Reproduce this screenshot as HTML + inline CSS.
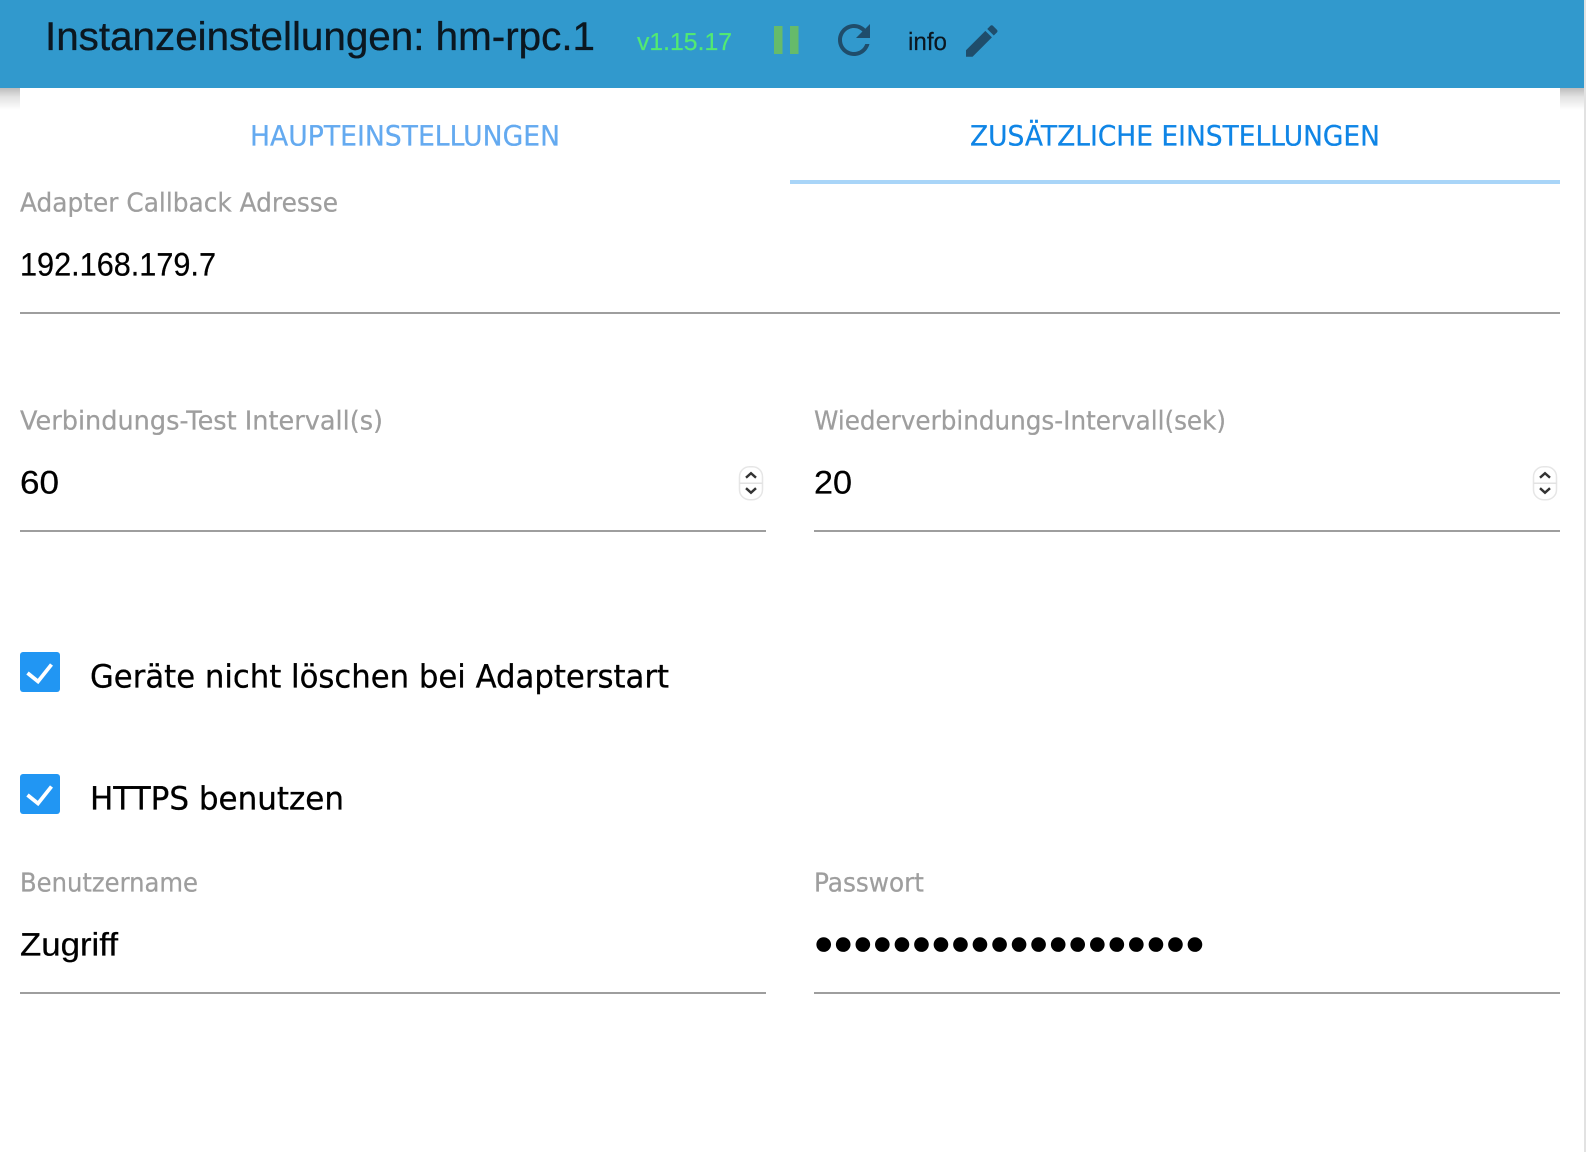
<!DOCTYPE html>
<html lang="de">
<head>
<meta charset="utf-8">
<title>Instanzeinstellungen</title>
<style>
html,body{margin:0;padding:0;background:#fff;width:1594px;height:1152px;overflow:hidden}
svg{display:block}
text{white-space:pre;text-rendering:geometricPrecision}
.h{font-family:"Liberation Sans",sans-serif}
.d{font-family:"DejaVu Sans",sans-serif}
.l{font-family:"DejaVu Sans",sans-serif;font-size:26px;fill:#9e9e9e;stroke:#9e9e9e;stroke-width:.25px}
.v{font-family:"Liberation Sans",sans-serif;font-size:32.500px;fill:#000;stroke:#000;stroke-width:.25px}
.c{font-family:"DejaVu Sans",sans-serif;font-size:32px;fill:#000;stroke:#000;stroke-width:.3px}
</style>
</head>
<body>
<svg xmlns="http://www.w3.org/2000/svg" width="1594" height="1152" viewBox="0 0 1594 1152">
<defs>
<linearGradient id="sh" x1="0" y1="0" x2="0" y2="1">
<stop offset="0" stop-color="#bcbcbc"/>
<stop offset=".4" stop-color="#e2e2e2"/>
<stop offset="1" stop-color="#ffffff"/>
</linearGradient>
</defs>
<rect x="0" y="0" width="1594" height="1152" fill="#fff"/>
<rect x="1584" y="0" width="2" height="1152" fill="#e2e2e2"/>
<rect x="0" y="88" width="20" height="22" fill="url(#sh)"/>
<rect x="1560" y="88" width="24" height="22" fill="url(#sh)"/>
<rect x="0" y="0" width="1584" height="88" fill="#3199cd"/>

<text class="h" x="45" y="50" font-size="40" fill="#0b1720" stroke="#0b1720" stroke-width=".35" textLength="550" lengthAdjust="spacingAndGlyphs">Instanzeinstellungen: hm-rpc.1</text>
<text class="h" x="637" y="50" font-size="24.500" fill="#52ea72" stroke="#52ea72" stroke-width=".2" textLength="95" lengthAdjust="spacingAndGlyphs">v1.15.17</text>
<rect x="774" y="26" width="8.500" height="28" fill="#66bb6a"/>
<rect x="790" y="26" width="8.500" height="28" fill="#66bb6a"/>
<path transform="translate(830 16) scale(2)" fill="#1f4d6b" d="M17.65 6.35C16.2 4.9 14.21 4 12 4c-4.42 0-7.99 3.58-7.99 8s3.57 8 7.99 8c3.73 0 6.84-2.55 7.73-6h-2.08c-.82 2.33-3.04 4-5.65 4-3.31 0-6-2.69-6-6s2.69-6 6-6c1.66 0 3.14.69 4.22 1.78L13 11h7V4l-2.35 2.35z"/>
<text class="h" x="908" y="50" font-size="25" fill="#0b1720" stroke="#0b1720" stroke-width=".2" textLength="39" lengthAdjust="spacingAndGlyphs">info</text>
<path transform="translate(960.750 20) scale(1.750)" fill="#1f4d6b" d="M3 17.25V21h3.75L17.81 9.94l-3.75-3.75L3 17.25zM20.71 7.04c.39-.39.39-1.02 0-1.41l-2.34-2.34c-.39-.39-1.02-.39-1.41 0l-1.83 1.83 3.75 3.75 1.83-1.830z"/>

<text class="d" x="250" y="145.700" font-size="28" fill="#64aaf0" stroke="#64aaf0" stroke-width=".25" textLength="310" lengthAdjust="spacingAndGlyphs">HAUPTEINSTELLUNGEN</text>
<text class="d" x="970" y="145.700" font-size="28" fill="#0f85e6" stroke="#0f85e6" stroke-width=".25" textLength="410" lengthAdjust="spacingAndGlyphs">ZUSÄTZLICHE EINSTELLUNGEN</text>
<rect x="790" y="180" width="770" height="4" fill="#a9d5f8"/>

<text class="l" x="20" y="211.700" textLength="318" lengthAdjust="spacingAndGlyphs">Adapter Callback Adresse</text>
<text class="v" x="20" y="275.500" textLength="196" lengthAdjust="spacingAndGlyphs">192.168.179.7</text>
<rect x="20" y="312" width="1540" height="2" fill="#9e9e9e"/>

<text class="l" x="20" y="429.700" textLength="363" lengthAdjust="spacingAndGlyphs">Verbindungs-Test Intervall(s)</text>
<text class="l" x="814" y="429.700" textLength="412" lengthAdjust="spacingAndGlyphs">Wiederverbindungs-Intervall(sek)</text>
<text class="v" x="20" y="493.500" textLength="39" lengthAdjust="spacingAndGlyphs">60</text>
<text class="v" x="814" y="493.500" textLength="38" lengthAdjust="spacingAndGlyphs">20</text>
<rect x="20" y="530" width="746" height="2" fill="#9e9e9e"/>
<rect x="814" y="530" width="746" height="2" fill="#9e9e9e"/>

<g fill="none" transform="translate(0 -.8)">
<rect x="739.500" y="467.500" width="23" height="33" rx="10" fill="#fff" stroke="#e6e6e6" stroke-width="1.500"/>
<path d="M739.500 484h23" stroke="#e2e2e2" stroke-width="1.500"/>
<path d="M746 478.500l5-4.500 5 4.500" stroke="#333" stroke-width="2.400"/>
<path d="M746 489l5 4.500 5-4.500" stroke="#333" stroke-width="2.400"/>
<rect x="1533.500" y="467.500" width="23" height="33" rx="10" fill="#fff" stroke="#e6e6e6" stroke-width="1.500"/>
<path d="M1533.500 484h23" stroke="#e2e2e2" stroke-width="1.500"/>
<path d="M1540 478.500l5-4.500 5 4.500" stroke="#333" stroke-width="2.400"/>
<path d="M1540 489l5 4.500 5-4.500" stroke="#333" stroke-width="2.400"/>
</g>

<rect x="20" y="652" width="40" height="40" rx="3" fill="#2196f3"/>
<path d="M27.500 673l10.500 8.500 13.500-17" fill="none" stroke="#fff" stroke-width="3.800"/>
<text class="c" x="90" y="687.500" textLength="579" lengthAdjust="spacingAndGlyphs">Geräte nicht löschen bei Adapterstart</text>

<rect x="20" y="774" width="40" height="40" rx="3" fill="#2196f3"/>
<path d="M27.500 795l10.500 8.500 13.500-17" fill="none" stroke="#fff" stroke-width="3.800"/>
<text class="c" x="90" y="809.500" textLength="254" lengthAdjust="spacingAndGlyphs">HTTPS benutzen</text>

<text class="l" x="20" y="891.700" textLength="178" lengthAdjust="spacingAndGlyphs">Benutzername</text>
<text class="l" x="814" y="891.700" textLength="110" lengthAdjust="spacingAndGlyphs">Passwort</text>
<text class="v" x="20" y="955.500" textLength="98" lengthAdjust="spacingAndGlyphs">Zugriff</text>
<text class="h" font-size="54" fill="#000" text-anchor="middle" y="962.400" x="823.7 843.2 862.8 882.3 901.9 921.4 940.9 960.5 980 999.6 1019.1 1038.6 1058.2 1077.7 1097.3 1116.8 1136.3 1155.9 1175.4 1195">••••••••••••••••••••</text>
<rect x="20" y="992" width="746" height="2" fill="#9e9e9e"/>
<rect x="814" y="992" width="746" height="2" fill="#9e9e9e"/>
</svg>
</body>
</html>
